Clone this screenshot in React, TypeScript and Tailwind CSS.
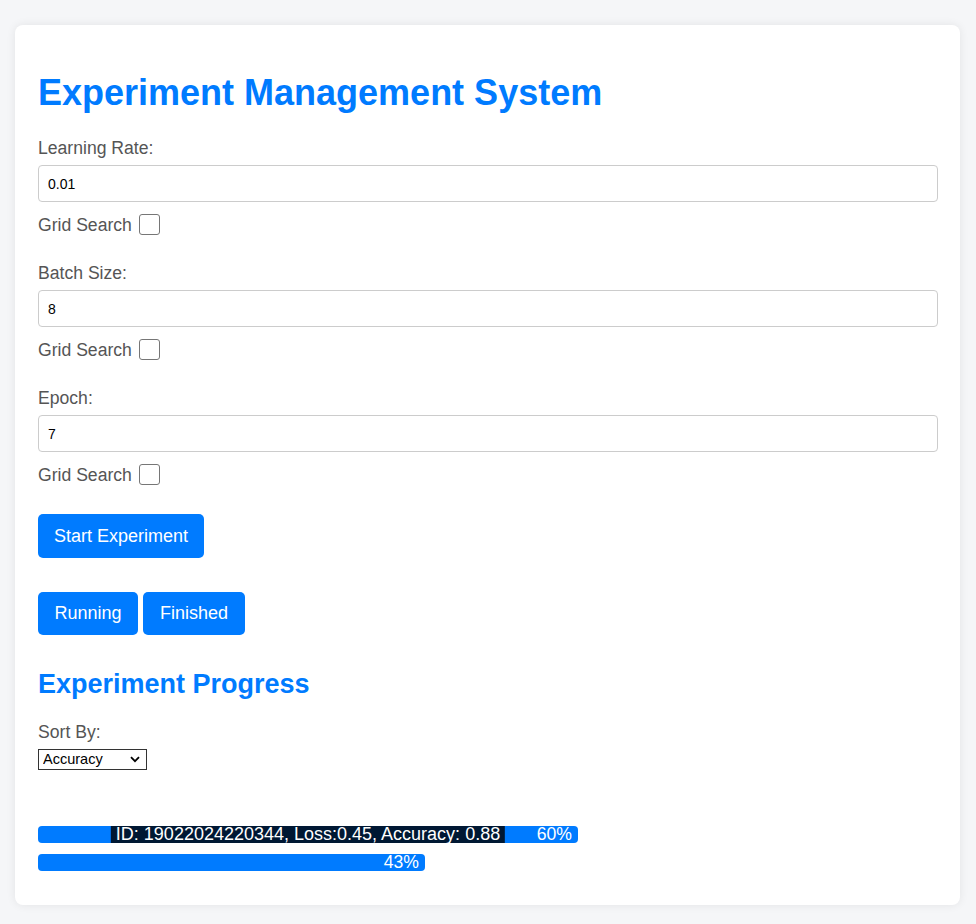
import { useState } from "react";

type Exp = { id: string; loss: number; accuracy: number; progress: number };

const experiments: Exp[] = [
  { id: "19022024220344", loss: 0.45, accuracy: 0.88, progress: 60 },
  { id: "19022024220512", loss: 0.52, accuracy: 0.81, progress: 43 },
];

function Param({ label, value }: { label: string; value: string }) {
  return (
    <div className="flex flex-col">
      <label className="text-[17.6px] leading-[20px] text-[#555]">{label}</label>
      <input
        defaultValue={value}
        className="mt-[7px] h-[37px] w-full rounded-[4px] border border-[#ccc] px-[9px] text-[14px] text-black outline-none"
      />
      <div className="mt-[12px] flex h-[21px] items-center">
        <span className="text-[17.6px] leading-[20px] text-[#555]">Grid Search</span>
        <input
          type="checkbox"
          className="ml-[7px] h-[21px] w-[21px] appearance-none rounded-[3px] border border-[#767676] bg-white"
        />
      </div>
    </div>
  );
}

export default function App() {
  const [sortBy, setSortBy] = useState("accuracy");
  const [hovered] = useState(0);

  return (
    <div className="min-h-[924px] bg-[#f5f6f8] px-[15px] pt-[25px] font-['Liberation_Sans',Arial,sans-serif]">
      <div className="w-[945px] rounded-[8px] bg-white pl-[23px] pr-[22px] pt-[47px] pb-[34px] shadow-[0_0_10px_rgba(0,0,0,0.08)]">
        <h1 className="text-[36px] font-bold leading-[41px] text-[#007bff]">
          Experiment Management System
        </h1>

        <div className="mt-[25px] flex flex-col gap-[28px]">
          <Param label="Learning Rate:" value="0.01" />
          <Param label="Batch Size:" value="8" />
          <Param label="Epoch:" value="7" />
        </div>

        <button className="mt-[29px] h-[44px] rounded-[5px] bg-[#007bff] px-4 text-[18px] text-white">
          Start Experiment
        </button>

        <div className="mt-[34px] flex gap-[5px]">
          <button className="h-[43px] w-[100px] rounded-[5px] bg-[#007bff] text-[18px] text-white">
            Running
          </button>
          <button className="h-[43px] w-[102px] rounded-[5px] bg-[#007bff] text-[18px] text-white">
            Finished
          </button>
        </div>

        <h2 className="mt-[35px] text-[27px] font-bold leading-[28px] text-[#007bff]">
          Experiment Progress
        </h2>

        <div className="mt-[24px] text-[17.6px] leading-[20px] text-[#555]">Sort By:</div>
        <div className="relative mt-[7px] w-[109px]">
          <select
            value={sortBy}
            onChange={(e) => setSortBy(e.target.value)}
            className="block h-[21px] w-[109px] appearance-none border border-[#333] bg-white pl-[4px] text-[14.5px] leading-[19px] text-black outline-none"
          >
            <option value="accuracy">Accuracy</option>
            <option value="loss">Loss</option>
          </select>
          <svg
            className="pointer-events-none absolute right-[7px] top-[7px]"
            width="10"
            height="7"
            viewBox="0 0 10 7"
            fill="none"
          >
            <path d="M1 1.2l4 4 4-4" stroke="#000" strokeWidth="1.8" />
          </svg>
        </div>

        <div className="mt-[56px] flex flex-col gap-[11px]">
          {experiments.map((exp, i) => (
            <div key={exp.id} className="w-full">
              <div
                className="relative flex h-[17px] items-center justify-end rounded-[4px] bg-[#007bff] pr-[6px]"
                style={{ width: `${exp.progress}%` }}
              >
                {hovered === i && (
                  <span className="absolute left-1/2 top-0 flex h-[17px] -translate-x-1/2 items-center whitespace-nowrap bg-black/80 px-[5px] text-[18px] leading-[17px] text-white">
                    ID: {exp.id}, Loss:{exp.loss}, Accuracy: {exp.accuracy}
                  </span>
                )}
                <span className="text-[17.6px] leading-[17px] text-white">{exp.progress}%</span>
              </div>
            </div>
          ))}
        </div>
      </div>
    </div>
  );
}
